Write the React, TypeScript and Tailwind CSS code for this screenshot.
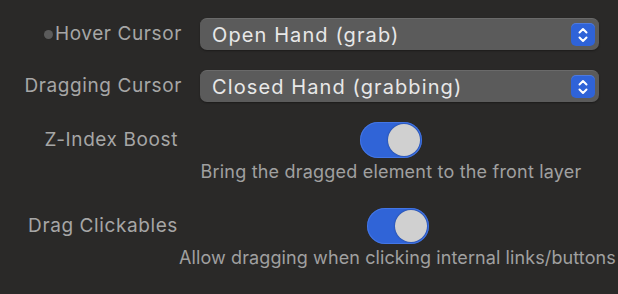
import React from 'react';

const Chevrons = () => (
  <div className="flex h-[23px] w-[24px] items-center justify-center rounded-[5px] bg-[#2f63d8] shadow-[inset_0_1px_0_rgba(255,255,255,0.15)]">
    <svg width="14" height="18" viewBox="0 0 14 18" fill="none" stroke="white" strokeWidth="2" strokeLinecap="round" strokeLinejoin="round">
      <path d="M3.5 6.5 L7 3 L10.5 6.5" />
      <path d="M3.5 11.5 L7 15 L10.5 11.5" />
    </svg>
  </div>
);

const Select = ({ value }: { value: string }) => (
  <div className="flex h-8 w-[399px] items-center justify-between rounded-[7px] border-t border-[#6a6a6a] bg-[#5b5b5b] pl-3 pr-1 shadow-[0_1px_2px_rgba(0,0,0,0.35)]">
    <span className="text-[20px] leading-none tracking-[1.1px] text-[#e8e8e8]">{value}</span>
    <Chevrons />
  </div>
);

const Toggle = () => (
  <div className="flex h-9 w-[62px] items-center justify-end rounded-full bg-[#3064d7] pr-[2px] shadow-[inset_0_0_0_1px_rgba(80,130,240,0.6)]">
    <div className="h-8 w-8 rounded-full bg-[#d0d0d0] shadow-[0_0_2px_rgba(0,0,0,0.4)]" />
  </div>
);

export default function App() {
  return (
    <div
      className="h-[294px] w-[618px] overflow-hidden bg-[#2a2928] pt-[18px]"
      style={{ fontFamily: 'Inter, "Liberation Sans", sans-serif' }}
    >
      <div className="flex items-center">
        <div className="w-[182px] text-right text-[19px] tracking-[0.6px] text-[#a6a6a6]">
          <span className="mr-[2px] inline-block h-[9px] w-[9px] rounded-full bg-[#5b5b5b] align-middle" />
          Hover Cursor
        </div>
        <div className="ml-[18px]">
          <Select value="Open Hand (grab)" />
        </div>
      </div>

      <div className="mt-5 flex items-center">
        <div className="w-[182px] text-right text-[19px] tracking-[0.6px] text-[#a6a6a6]">Dragging Cursor</div>
        <div className="ml-[18px]">
          <Select value="Closed Hand (grabbing)" />
        </div>
      </div>

      <div className="mt-5 flex items-start">
        <div className="flex h-9 w-[178px] items-center justify-end text-[19px] tracking-[0.6px] text-[#a6a6a6]">Z-Index Boost</div>
        <div className="ml-[22px] flex w-[382px] flex-col items-center">
          <Toggle />
          <div className="mt-[3px] w-full whitespace-nowrap text-center text-[18px] leading-[22px] tracking-[0.2px] text-[#a0a0a0]">
            Bring the dragged element to the front layer
          </div>
        </div>
      </div>

      <div className="mt-[25px] flex items-start">
        <div className="flex h-9 w-[178px] items-center justify-end text-[19px] tracking-[0.6px] text-[#a6a6a6]">Drag Clickables</div>
        <div className="flex w-[439px] flex-col items-center">
          <Toggle />
          <div className="mt-[3px] w-full whitespace-nowrap text-center text-[18px] leading-[22px] tracking-[0.1px] text-[#a0a0a0]">
            Allow dragging when clicking internal links/buttons
          </div>
        </div>
      </div>
    </div>
  );
}
